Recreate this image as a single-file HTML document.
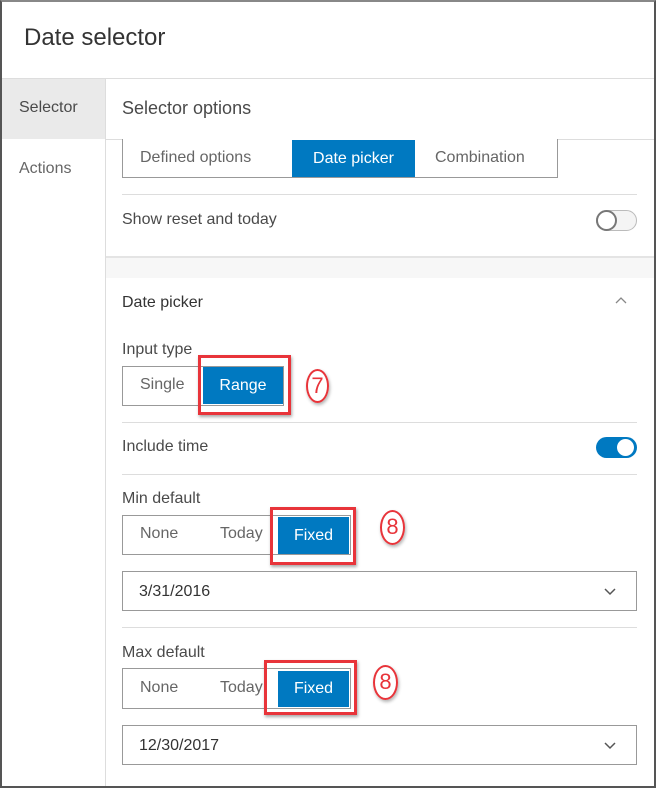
<!DOCTYPE html>
<html><head><meta charset="utf-8"><style>
*{box-sizing:border-box;margin:0;padding:0}
body{width:656px;height:788px;background:#fff;font-family:"Liberation Sans",sans-serif;color:#4a4a4a;position:relative;overflow:hidden}
.a{position:absolute}
.t{font-size:16px;color:#4a4a4a;white-space:nowrap}
.seg{position:absolute;border:1px solid #999;background:#fff}
.blue{position:absolute;background:#0079c1;color:#fff;font-size:16px;text-align:center}
.red{position:absolute;border:3px solid #e8343a;box-shadow:1px 2px 3px rgba(0,0,0,.35)}
.circ{position:absolute;border:2.5px solid #e8343a;border-radius:50%;color:#e8343a;font-size:22px;text-align:center;box-shadow:1px 2px 3px rgba(0,0,0,.3)}
.hr{position:absolute;height:1px;background:#ddd}
.inp{position:absolute;left:122px;width:515px;height:40px;border:1px solid #999;font-size:16px;padding:11px 0 0 16px;color:#333}
</style></head><body>
<div class="a" style="left:0;top:0;width:656px;height:788px;border:2px solid #555;border-top-color:#888"></div>
<div class="a t" style="left:24px;top:24px;font-size:24px;color:#333">Date selector</div>
<div class="hr" style="left:2px;top:78px;width:652px;background:#ddd"></div>
<div class="a" style="left:2px;top:79px;width:104px;height:60px;background:#eaeaea"></div>
<div class="a" style="left:105px;top:79px;width:1px;height:707px;background:#ddd"></div>
<div class="a t" style="left:19px;top:99px">Selector</div>
<div class="a t" style="left:19px;top:160px;color:#666">Actions</div>
<div class="a t" style="left:122px;top:98px;font-size:18px">Selector options</div>
<div class="hr" style="left:106px;top:139px;width:548px"></div>
<div class="seg" style="left:122px;top:139px;width:436px;height:39px;border-top:none"></div>
<div class="a t" style="left:140px;top:149px;color:#666">Defined options</div>
<div class="blue" style="left:292px;top:140px;width:123px;height:37px;line-height:37px">Date picker</div>
<div class="a t" style="left:435px;top:149px;color:#666">Combination</div>
<div class="hr" style="left:122px;top:194px;width:515px"></div>
<div class="a t" style="left:122px;top:211px">Show reset and today</div>
<div class="a" style="left:596px;top:210px;width:41px;height:21px;border:1px solid #bbb;border-radius:11px;background:#f4f4f4"></div>
<div class="a" style="left:596px;top:210px;width:21px;height:21px;border:2px solid #777;border-radius:50%;background:#fff"></div>
<div class="a" style="left:106px;top:256px;width:548px;height:2px;background:#e4e4e4"></div>
<div class="a" style="left:106px;top:258px;width:548px;height:20px;background:#f7f7f7"></div>
<div class="a t" style="left:122px;top:294px;color:#333">Date picker</div>
<svg class="a" style="left:614px;top:296px" width="14" height="10"><path d="M2 7 L7 2 L12 7" fill="none" stroke="#888" stroke-width="1.3"/></svg>
<div class="a t" style="left:122px;top:341px">Input type</div>
<div class="seg" style="left:122px;top:366px;width:162px;height:40px"></div>
<div class="a t" style="left:140px;top:376px;color:#666">Single</div>
<div class="blue" style="left:203px;top:367px;width:80px;height:37px;line-height:37px">Range</div>
<div class="red" style="left:198px;top:355px;width:93px;height:60px"></div>
<div class="circ" style="left:306px;top:369px;width:23px;height:34px;line-height:29px">7</div>
<div class="hr" style="left:122px;top:422px;width:515px"></div>
<div class="a t" style="left:122px;top:438px">Include time</div>
<div class="a" style="left:596px;top:437px;width:41px;height:21px;border-radius:11px;background:#0079c1"></div>
<div class="a" style="left:617px;top:439px;width:17px;height:17px;border-radius:50%;background:#fff"></div>
<div class="hr" style="left:122px;top:474px;width:515px"></div>
<div class="a t" style="left:122px;top:490px">Min default</div>
<div class="seg" style="left:122px;top:515px;width:229px;height:40px"></div>
<div class="a t" style="left:140px;top:525px;color:#666">None</div>
<div class="a t" style="left:220px;top:525px;color:#666">Today</div>
<div class="blue" style="left:278px;top:517px;width:71px;height:37px;line-height:37px">Fixed</div>
<div class="red" style="left:270px;top:507px;width:86px;height:58px"></div>
<div class="circ" style="left:380px;top:510px;width:25px;height:35px;line-height:30px">8</div>
<div class="inp" style="top:571px">3/31/2016</div>
<svg class="a" style="left:603px;top:586px" width="14" height="10"><path d="M2 3 L7 8 L12 3" fill="none" stroke="#555" stroke-width="1.5"/></svg>
<div class="hr" style="left:122px;top:627px;width:515px"></div>
<div class="a t" style="left:122px;top:644px">Max default</div>
<div class="seg" style="left:122px;top:668px;width:229px;height:41px"></div>
<div class="a t" style="left:140px;top:679px;color:#666">None</div>
<div class="a t" style="left:220px;top:679px;color:#666">Today</div>
<div class="blue" style="left:278px;top:671px;width:71px;height:36px;line-height:36px">Fixed</div>
<div class="red" style="left:264px;top:660px;width:93px;height:55px"></div>
<div class="circ" style="left:373px;top:665px;width:25px;height:35px;line-height:30px">8</div>
<div class="inp" style="top:725px">12/30/2017</div>
<svg class="a" style="left:603px;top:740px" width="14" height="10"><path d="M2 3 L7 8 L12 3" fill="none" stroke="#555" stroke-width="1.5"/></svg>
</body></html>
